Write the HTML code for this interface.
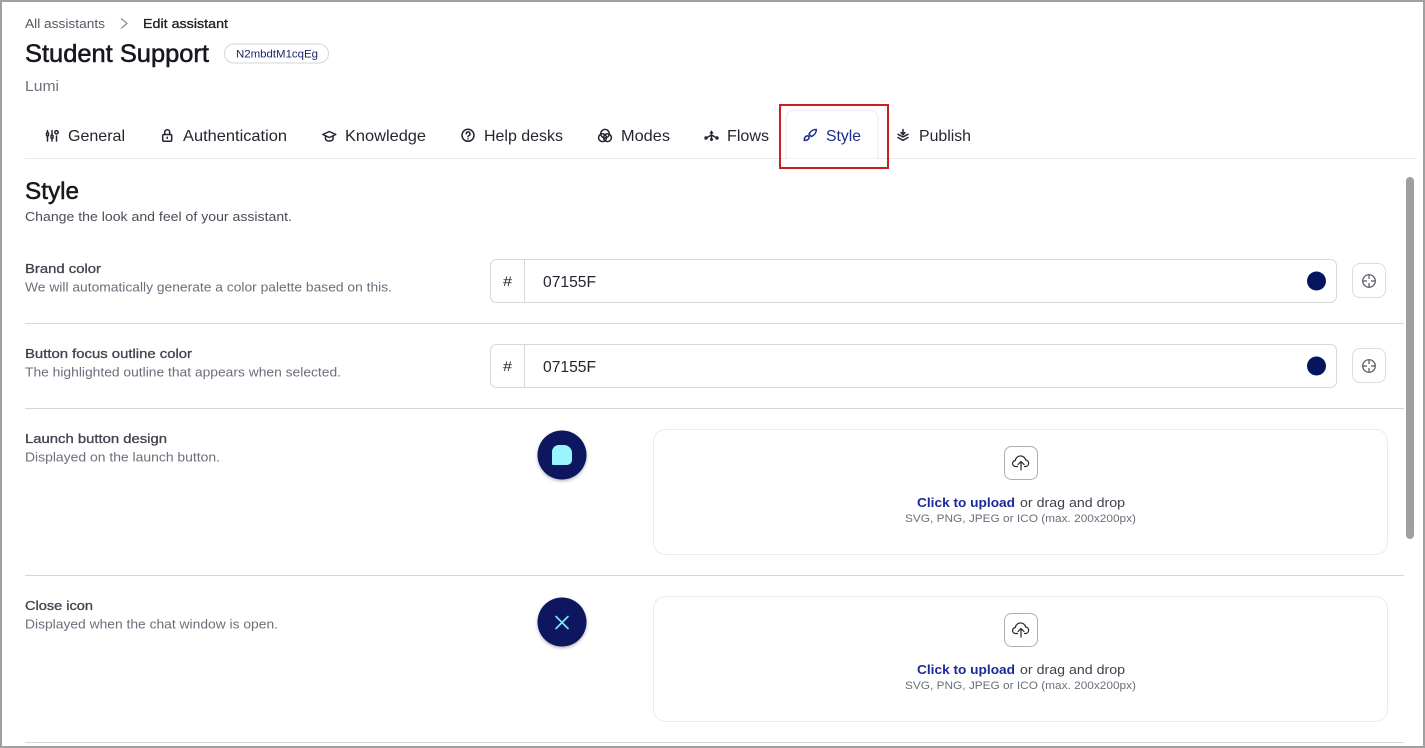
<!DOCTYPE html>
<html><head><meta charset="utf-8"><title>Edit assistant</title>
<style>
html,body{margin:0;padding:0;width:1425px;height:748px;overflow:hidden;background:#fff}
svg{display:block}
text{font-family:"Liberation Sans",sans-serif;white-space:pre}
.i{fill:none;stroke:#23262f;stroke-width:1.5;stroke-linecap:round;stroke-linejoin:round}
.tab{font-size:16px;fill:#23262f}
.lab{font-size:13px;fill:#41444f;stroke:#41444f;stroke-width:.3px}
.sub{font-size:13px;fill:#6b6f7b}
.val{font-size:16px;fill:#23262f}
.hash{font-size:14px;fill:#23262f}
.card{fill:#fff;stroke:#ececef}
.ln{stroke:#d6d6d8;stroke-width:1}
.box{fill:#fff;stroke:#d8d8da}
</style></head>
<body>
<svg width="1425" height="748" viewBox="0 0 1425 748" xmlns="http://www.w3.org/2000/svg">
<defs>
<filter id="sh" x="-30%" y="-30%" width="160%" height="170%"><feDropShadow dx="0" dy="1.500" stdDeviation="1.500" flood-color="#000" flood-opacity=".3"/></filter>
</defs>
<rect width="1425" height="748" fill="#fff"/>

<!-- Header -->
<text x="25" y="28" font-size="13" fill="#555965" textLength="80" lengthAdjust="spacingAndGlyphs">All assistants</text>
<path d="M121 18.500l6 5-6 5" fill="none" stroke="#777b85" stroke-width="1.100"/>
<text x="143" y="28" font-size="13" fill="#1e2027" stroke="#1e2027" stroke-width=".3" textLength="85" lengthAdjust="spacingAndGlyphs">Edit assistant</text>
<text x="25" y="62" font-size="25" fill="#16181e" stroke="#16181e" stroke-width=".55" textLength="184" lengthAdjust="spacingAndGlyphs">Student Support</text>
<rect x="224.500" y="44" width="104" height="19" rx="9.500" fill="#fff" stroke="#d6d6da"/>
<text x="236" y="57.500" font-size="11" fill="#1a2668" textLength="82" lengthAdjust="spacingAndGlyphs">N2mbdtM1cqEg</text>
<text x="25" y="91" font-size="15" fill="#6d717c" textLength="34" lengthAdjust="spacingAndGlyphs">Lumi</text>

<!-- Tabs -->
<line x1="25" y1="158.500" x2="1417" y2="158.500" stroke="#e8e9ec"/>
<path d="M786 158.500V118a8 8 0 0 1 8-8h76a8 8 0 0 1 8 8v40.500" fill="#fff" stroke="#e8e9ec"/>
<rect x="780" y="105" width="108" height="63" fill="none" stroke="#c7201f" stroke-width="2"/>

<text class="tab" x="68" y="141" textLength="57" lengthAdjust="spacingAndGlyphs">General</text>
<text class="tab" x="183" y="141" textLength="104" lengthAdjust="spacingAndGlyphs">Authentication</text>
<text class="tab" x="345" y="141" textLength="81" lengthAdjust="spacingAndGlyphs">Knowledge</text>
<text class="tab" x="484" y="141" textLength="79" lengthAdjust="spacingAndGlyphs">Help desks</text>
<text class="tab" x="621" y="141" textLength="49" lengthAdjust="spacingAndGlyphs">Modes</text>
<text class="tab" x="727" y="141" textLength="42" lengthAdjust="spacingAndGlyphs">Flows</text>
<text x="826" y="141" font-size="16" fill="#1c2a8c" textLength="35" lengthAdjust="spacingAndGlyphs">Style</text>
<text class="tab" x="919" y="141" textLength="52" lengthAdjust="spacingAndGlyphs">Publish</text>

<!-- General icon -->
<g class="i" stroke-width="1.600">
<path d="M47.500 130.500v1.500M47.500 137v4M52 130.500v4M52 139.500v1.500M56.500 136v5"/>
<rect x="46.500" y="132.500" width="2" height="3.500" rx="1"/><rect x="51" y="135" width="2" height="3.500" rx="1"/><circle cx="56.500" cy="132.300" r="1.700"/>
</g>
<!-- Lock -->
<g class="i" stroke-width="1.500"><rect x="162.700" y="134.500" width="9" height="6.800" rx="1.300"/><path d="M164.700 134.500v-2.300a2.500 2.500 0 0 1 5 0v2.300"/><path d="M167.200 137.200v1.200"/></g>
<!-- Grad cap -->
<g class="i" stroke-width="1.400"><path d="M322.800 134.500l6.500-3 6.500 3-6.500 3z"/><path d="M325.500 136.500v2.500c0 1.200 1.800 2 3.800 2s3.800-.8 3.800-2v-2.500"/></g>
<!-- Help -->
<g class="i" stroke-width="1.300"><circle cx="468" cy="135.300" r="6"/><path d="M466.200 133.800a1.900 1.900 0 1 1 2.800 1.700c-.7.400-1 .8-1 1.300"/><path d="M468 138.800v.1"/></g>
<!-- Modes -->
<g class="i" stroke-width="1.300"><circle cx="605" cy="133.700" r="4.300"/><circle cx="602.500" cy="137.700" r="3.900"/><circle cx="607.500" cy="137.700" r="3.900"/></g>
<!-- Flows -->
<g class="i" stroke-width="1.400"><path d="M711.500 132v7M711.500 135l-4.500 2.500M711.500 135l4.500 2.500"/></g>
<path d="M709.300 133.500l2.200-3.200 2.200 3.200z" fill="#23262f"/><circle cx="706" cy="138" r="1.700" fill="#23262f"/><circle cx="711.500" cy="139.500" r="1.500" fill="#23262f"/><circle cx="717" cy="138" r="1.700" fill="#23262f"/>
<!-- Brush -->
<g fill="none" stroke="#1c2a8c" stroke-width="1.500" stroke-linejoin="round" stroke-linecap="round"><path d="M816.300 129.500c-3.200-.2-6 1.800-7.300 4.700l2.400 2.400c2.900-1.300 5-4 4.900-7.100z"/><path d="M808 135.800c-2.400 0-3.700 1.500-3.800 4.600 3 .2 4.900-1.200 5-3.400z"/></g>
<!-- Publish -->
<g class="i" stroke-width="1.400"><path d="M903 129.500v4.500M901 132.500l2 2.200 2-2.200"/><path d="M898 134.300l5 2.600 5-2.600"/><path d="M898 137.500l5 2.800 5-2.800"/></g>

<!-- Style heading -->
<text x="25" y="199" font-size="24" fill="#16181e" stroke="#16181e" stroke-width=".5" textLength="54" lengthAdjust="spacingAndGlyphs">Style</text>
<text x="25" y="221" font-size="13" fill="#4a4d58" textLength="267" lengthAdjust="spacingAndGlyphs">Change the look and feel of your assistant.</text>

<!-- Row 1 -->
<text class="lab" x="25" y="273" textLength="76" lengthAdjust="spacingAndGlyphs">Brand color</text>
<text class="sub" x="25" y="291.500" textLength="367" lengthAdjust="spacingAndGlyphs">We will automatically generate a color palette based on this.</text>
<rect class="box" x="490.500" y="259.500" width="846" height="43" rx="6"/>
<line x1="524.500" y1="260" x2="524.500" y2="302" stroke="#d8d8da"/>
<text class="hash" x="503" y="286" textLength="9" lengthAdjust="spacingAndGlyphs">#</text>
<text class="val" x="543" y="287" textLength="53" lengthAdjust="spacingAndGlyphs">07155F</text>
<circle cx="1316.500" cy="281" r="9.500" fill="#07155f"/>
<rect x="1352.500" y="263.500" width="33" height="34" rx="7.500" fill="#fff" stroke="#dcdcde"/>
<g fill="none" stroke="#55575f" stroke-width="1.200"><circle cx="1369" cy="281" r="6.300"/><path d="M1369 275v4M1369 283v4M1363 281h4M1371 281h4"/></g>
<line class="ln" x1="25" y1="323.500" x2="1404" y2="323.500"/>

<!-- Row 2 -->
<text class="lab" x="25" y="358" textLength="167" lengthAdjust="spacingAndGlyphs">Button focus outline color</text>
<text class="sub" x="25" y="376.500" textLength="316" lengthAdjust="spacingAndGlyphs">The highlighted outline that appears when selected.</text>
<rect class="box" x="490.500" y="344.500" width="846" height="43" rx="6"/>
<line x1="524.500" y1="345" x2="524.500" y2="387" stroke="#d8d8da"/>
<text class="hash" x="503" y="371" textLength="9" lengthAdjust="spacingAndGlyphs">#</text>
<text class="val" x="543" y="372" textLength="53" lengthAdjust="spacingAndGlyphs">07155F</text>
<circle cx="1316.500" cy="366" r="9.500" fill="#07155f"/>
<rect x="1352.500" y="348.500" width="33" height="34" rx="7.500" fill="#fff" stroke="#dcdcde"/>
<g fill="none" stroke="#55575f" stroke-width="1.200"><circle cx="1369" cy="366" r="6.300"/><path d="M1369 360v4M1369 368v4M1363 366h4M1371 366h4"/></g>
<line class="ln" x1="25" y1="408.500" x2="1404" y2="408.500"/>

<!-- Row 3 -->
<text class="lab" x="25" y="443" textLength="142" lengthAdjust="spacingAndGlyphs">Launch button design</text>
<text class="sub" x="25" y="461.500" textLength="195" lengthAdjust="spacingAndGlyphs">Displayed on the launch button.</text>
<circle cx="562" cy="455" r="24.500" fill="#07155f" filter="url(#sh)"/>
<path d="M552 452a7 7 0 0 1 7-7h5a8 8 0 0 1 8 8v7a5 5 0 0 1-5 5h-14a1 1 0 0 1-1-1z" fill="#99f6ff"/>
<rect class="card" x="653.500" y="429.500" width="734" height="125" rx="12"/>
<rect x="1004.500" y="446.500" width="33" height="33" rx="7" fill="#fff" stroke="#aeaeb0"/>
<g fill="none" stroke="#24262e" stroke-width="1.200" stroke-linecap="round" stroke-linejoin="round"><path d="M1017.500 466.500h-1.700a3 3 0 0 1-.5-6 5.300 5.300 0 0 1 10.400-.5 3.300 3.300 0 0 1 .3 6.500h-1.500"/><path d="M1021 470v-8.500M1018 464.500l3-3 3 3"/></g>
<text x="917" y="507" font-size="13" font-weight="700" fill="#1a2a9a" textLength="98" lengthAdjust="spacingAndGlyphs">Click to upload</text>
<text x="1020" y="507" font-size="13" fill="#3e414c" textLength="105" lengthAdjust="spacingAndGlyphs">or drag and drop</text>
<text x="905" y="522" font-size="11" fill="#6b6f7b" textLength="231" lengthAdjust="spacingAndGlyphs">SVG, PNG, JPEG or ICO (max. 200x200px)</text>
<line class="ln" x1="25" y1="575.500" x2="1404" y2="575.500"/>

<!-- Row 4 -->
<text class="lab" x="25" y="610" textLength="68" lengthAdjust="spacingAndGlyphs">Close icon</text>
<text class="sub" x="25" y="628.500" textLength="253" lengthAdjust="spacingAndGlyphs">Displayed when the chat window is open.</text>
<circle cx="562" cy="622" r="24.500" fill="#07155f" filter="url(#sh)"/>
<path d="M556 616.500l12 12M568 616.500l-12 12" stroke="#7ce8f2" stroke-width="1.700" stroke-linecap="round"/>
<rect class="card" x="653.500" y="596.500" width="734" height="125" rx="12"/>
<rect x="1004.500" y="613.500" width="33" height="33" rx="7" fill="#fff" stroke="#aeaeb0"/>
<g fill="none" stroke="#24262e" stroke-width="1.200" stroke-linecap="round" stroke-linejoin="round"><path d="M1017.500 633.500h-1.700a3 3 0 0 1-.5-6 5.300 5.300 0 0 1 10.400-.5 3.300 3.300 0 0 1 .3 6.500h-1.500"/><path d="M1021 637v-8.500M1018 631.500l3-3 3 3"/></g>
<text x="917" y="674" font-size="13" font-weight="700" fill="#1a2a9a" textLength="98" lengthAdjust="spacingAndGlyphs">Click to upload</text>
<text x="1020" y="674" font-size="13" fill="#3e414c" textLength="105" lengthAdjust="spacingAndGlyphs">or drag and drop</text>
<text x="905" y="689" font-size="11" fill="#6b6f7b" textLength="231" lengthAdjust="spacingAndGlyphs">SVG, PNG, JPEG or ICO (max. 200x200px)</text>
<line class="ln" x1="25" y1="742.500" x2="1404" y2="742.500"/>

<!-- Scrollbar -->
<rect x="1406" y="177" width="8" height="362" rx="4" fill="#9f9f9f"/>

<!-- Outer frame -->
<rect x="1" y="1" width="1423" height="746" fill="none" stroke="#a0a0a0" stroke-width="2"/>
</svg>
</body></html>
